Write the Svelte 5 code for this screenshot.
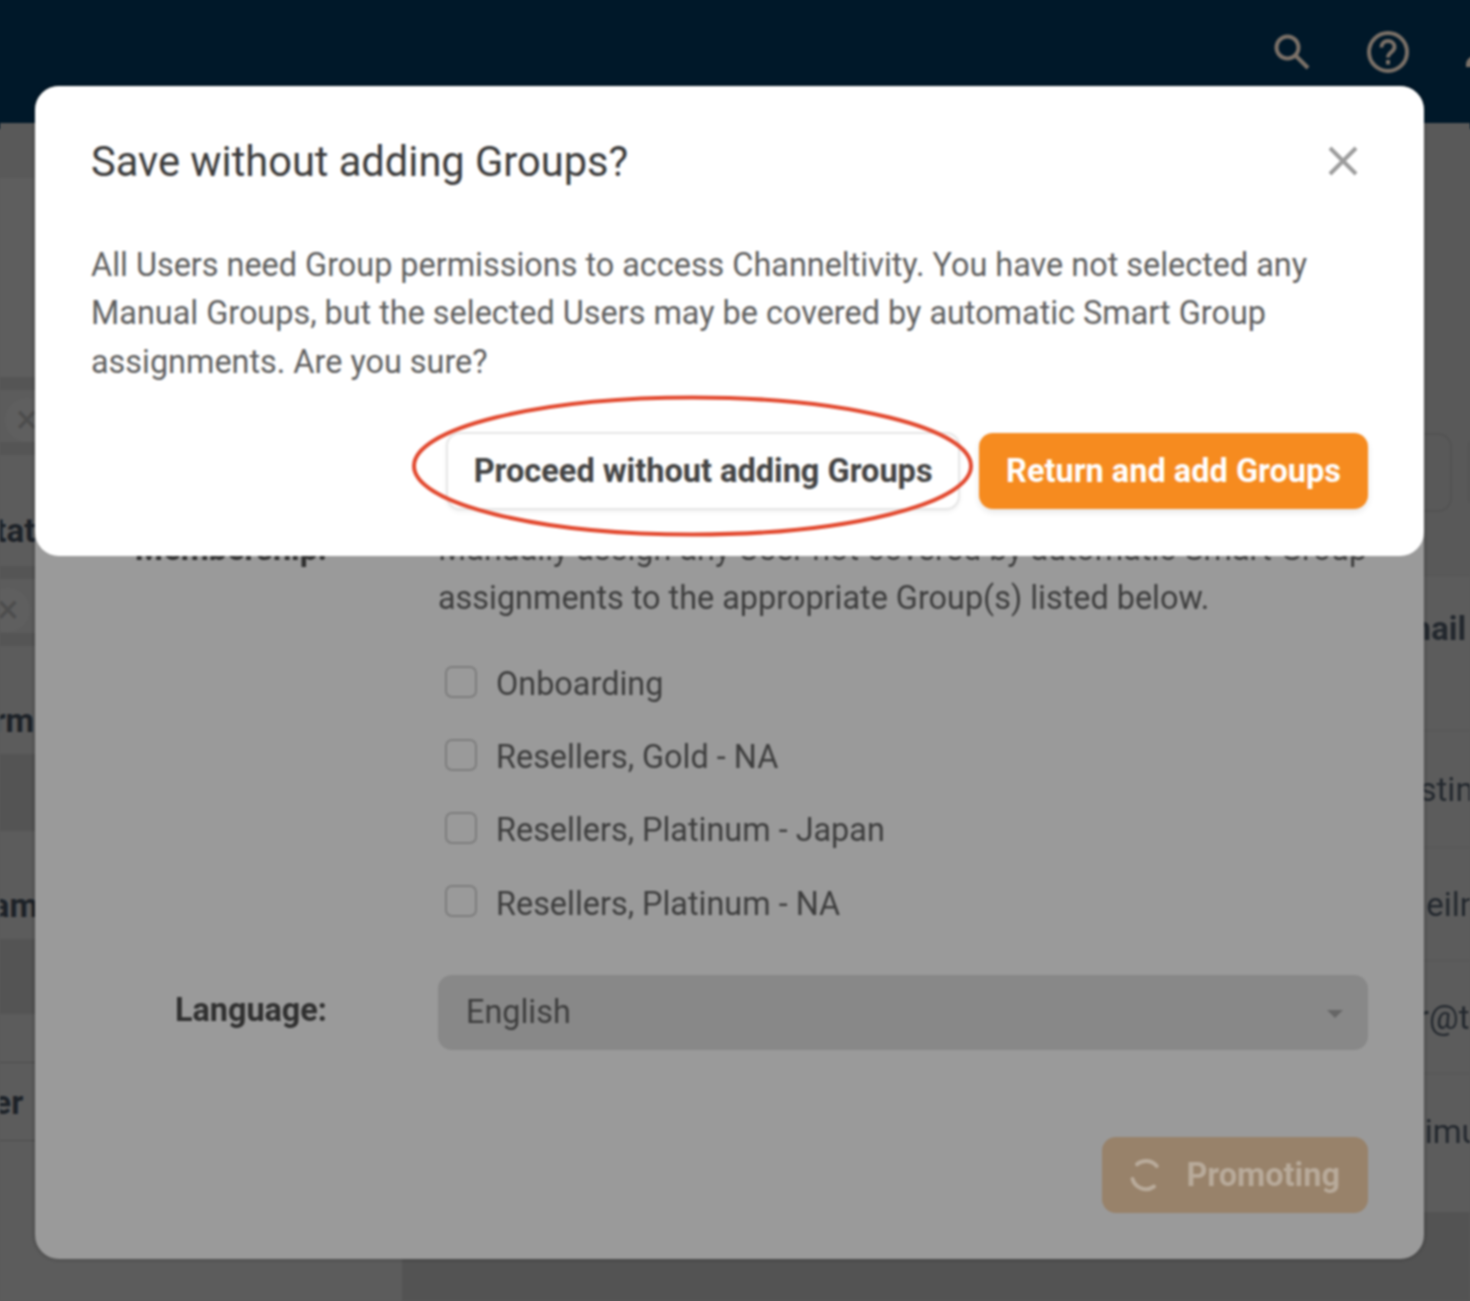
<script lang="ts">
	const leftLabels = [
		{ text: "Status", cls: "status" },
		{ text: "Form", cls: "form" },
		{ text: "Team", cls: "team" },
		{ text: "Partner", cls: "partner" },
	];

	const groups = [
		"Onboarding",
		"Resellers, Gold - NA",
		"Resellers, Platinum - Japan",
		"Resellers, Platinum - NA",
	];

	// only the tail of these shows past the dialog
	const tableRows = ["Post-Existing", "Jane ONeilnor", "iantester@test", "Low Minimum"];
</script>

<div class="page">
	<div class="canvas">
		<header class="topbar">
			<svg class="icon search" width="40" height="40" viewBox="0 0 40 40" fill="none" stroke="#7b7168" stroke-width="4">
				<circle cx="15.5" cy="15.5" r="11" />
				<path d="M23.5 23.5 36 36" />
			</svg>
			<svg class="icon" width="44" height="44" viewBox="0 0 44 44" fill="none" stroke="#7b7168" stroke-width="4">
				<circle cx="22" cy="22" r="19" />
				<path d="M15.5 17.5c0-4 3-6.500 6.500-6.500s6.500 2.500 6.500 6c0 5-6.500 5-6.500 10.500" />
				<path d="M22 30v4.500" />
			</svg>
			<svg class="icon user" width="40" height="40" viewBox="0 0 40 40" fill="#7b7168">
				<circle cx="20" cy="12" r="8" />
				<path d="M4 32c0-7 10-10 16-10s16 3 16 10v3H4z" />
			</svg>
		</header>

		<main class="backdrop">
			<section class="left-panel">
				<div class="left-head"></div>
				<div class="left-intro"></div>
				<div class="band"></div>
				<div class="chip-row"><span class="chip-x">×</span></div>
				<div class="band"></div>
				<div class="label-row status-row"><b>{leftLabels[0].text}</b></div>
				<div class="band"></div>
				<div class="chip-row second"><span class="chip-x">×</span></div>
				<div class="band"></div>
				<div class="label-row form-row"><b>{leftLabels[1].text}</b></div>
				<div class="dark-row"></div>
				<div class="label-row team-row"><b>{leftLabels[2].text}</b></div>
				<div class="dark-row tall"></div>
				<div class="left-gap"></div>
				<div class="label-row partner-row"><b>{leftLabels[3].text}</b></div>
			</section>

			<section class="right-panel">
				<div class="tool-row">
					<span class="tool-box"></span>
					<span class="tool-box"></span>
				</div>
				<div class="table">
					<div class="table-head"><b>Email</b></div>
					{#each tableRows as row}
						<div class="table-row"><span>{row}</span></div>
					{/each}
				</div>
			</section>
		</main>

		<div class="modal under">
			<div class="form-grid">
				<div class="field-label member">Membership:</div>
				<div>
					<p class="help">Manually assign any User not covered by automatic Smart Group assignments to the appropriate Group(s) listed below.</p>
					<ul class="checks">
						{#each groups as group}
							<li><span class="box"></span>{group}</li>
						{/each}
					</ul>
				</div>
				<div class="field-label lang">Language:</div>
				<div class="select">
					<span>English</span>
					<span class="caret"></span>
				</div>
			</div>
			<div class="under-foot">
				<button class="promote">
					<svg width="36" height="36" viewBox="0 0 36 36" fill="none" stroke="#b9ab9b" stroke-width="4" stroke-linecap="round">
						<path d="M9 7.300A14 14 0 0 1 28.700 9" />
						<path d="M4.500 22A14 14 0 0 0 26 29.500" />
					</svg>
					Promoting
				</button>
			</div>
		</div>

		<div class="modal top">
			<div class="top-head">
				<h2>Save without adding Groups?</h2>
				<svg class="close" width="32" height="32" viewBox="0 0 32 32" stroke="#9c9c9c" stroke-width="4">
					<path d="M3 3 29 29M29 3 3 29" />
				</svg>
			</div>
			<p class="message">All Users need Group permissions to access Channeltivity. You have not selected any Manual Groups, but the selected Users may be covered by automatic Smart Group assignments. Are you sure?</p>
			<div class="actions">
				<button class="btn plain">Proceed without adding Groups</button>
				<button class="btn orange">Return and add Groups</button>
			</div>
		</div>

		<svg class="mark" width="1470" height="1301" viewBox="0 0 1470 1301" fill="none">
			<ellipse cx="692.500" cy="466" rx="278.500" ry="68.500" stroke="#e2492f" stroke-width="4" />
		</svg>
	</div>
</div>

<style>
	:global(body) {
		margin: 0;
	}

	.page {
		width: 1470px;
		height: 1301px;
		overflow: hidden;
	}

	/* the shadow keeps the blur from fading out at the picture's edges */
	.canvas {
		position: relative;
		width: 1470px;
		height: 1301px;
		background: #535353;
		box-shadow: 0 0 0 6px #5a5a5a;
		font-family: Roboto, "Liberation Sans", sans-serif;
		filter: blur(0.8px);
	}

	.topbar {
		height: 123px;
		box-sizing: border-box;
		background: #001829;
		box-shadow: 0 0 0 6px #001829;
		display: flex;
		align-items: flex-start;
		justify-content: flex-end;
		gap: 52px;
		padding: 30px 0 0;
		margin-right: -32px;
	}

	.icon.search {
		margin: 2px 2px 0 0;
	}

	.icon.user {
		margin-top: 2px;
	}

	.backdrop {
		display: grid;
		grid-template-columns: 402px 1fr;
		height: 1178px;
	}

	.left-panel {
		background: #5c5c5c;
		display: flex;
		flex-direction: column;
		font-size: 33px;
		color: #1d2228;
		overflow: hidden;
	}

	.left-head {
		height: 55px;
		background: #595959;
		flex: none;
	}

	.left-intro {
		height: 199px;
		background: #5e5e5e;
		flex: none;
	}

	.band {
		height: 13px;
		background: #555;
		flex: none;
	}

	.chip-row {
		height: 52px;
		flex: none;
		display: flex;
		align-items: center;
		background: #5c5c5c;
		color: #4d4d4d;
	}

	.chip-row.second {
		height: 54px;
	}

	.chip-x {
		width: 44px;
		height: 44px;
		border-radius: 50%;
		background: #5f5f5f;
		display: flex;
		align-items: center;
		justify-content: center;
		font-size: 40px;
		line-height: 1;
		margin: 8px 0 0 5px;
	}

	.chip-row.second .chip-x {
		margin-left: -14px;
	}

	.label-row {
		flex: none;
		display: flex;
		align-items: center;
		background: #5c5c5c;
	}

	.status-row {
		height: 111px;
		padding-top: 40px;
		box-sizing: border-box;
	}

	.status-row b {
		margin-left: -25px;
	}

	.form-row {
		height: 108px;
		padding-top: 40px;
		box-sizing: border-box;
	}

	.form-row b {
		margin-left: -43px;
	}

	.team-row {
		height: 108px;
		padding-top: 40px;
		box-sizing: border-box;
	}

	.team-row b {
		margin-left: -45px;
	}

	.dark-row {
		height: 77px;
		background: #545454;
		flex: none;
	}

	.dark-row.tall {
		height: 75px;
	}

	.left-gap {
		height: 48px;
		flex: none;
		background: #5c5c5c;
		border-bottom: 1px solid #4c4c4c;
	}

	.partner-row {
		height: 78px;
		padding-top: 2px;
		box-sizing: border-box;
		border-bottom: 1px solid #4c4c4c;
	}

	.partner-row b {
		margin-left: -88px;
	}

	.right-panel {
		overflow: hidden;
		display: flex;
		flex-direction: column;
		background: linear-gradient(#595959, #595959) top / 100% 452px no-repeat;
	}

	.tool-row {
		display: flex;
		justify-content: flex-end;
		gap: 16px;
		margin: 310px -88px 0 0;
		height: 79px;
		flex: none;
	}

	.tool-box {
		width: 90px;
		border: 2px solid #535353;
		border-radius: 14px;
		box-sizing: border-box;
	}

	.table {
		margin-top: 63px;
		height: 637px;
		flex: none;
		background: #5c5c5c;
		border-top: 1px solid #555;
		box-sizing: border-box;
		font-size: 33px;
		color: #23282e;
		white-space: nowrap;
	}

	.table-head {
		height: 155px;
		display: flex;
		align-items: center;
		padding: 0 0 50px 982px;
		box-sizing: border-box;
		border-bottom: 1px solid #555;
	}

	.table-row {
		height: 113px;
		display: flex;
		align-items: center;
		box-sizing: border-box;
		border-bottom: 1px solid #555;
		padding-left: 898px;
	}

	.table-row:nth-child(2) {
		height: 117px;
	}

	.table-row:last-child {
		border-bottom: 0;
		height: 140px;
		padding-bottom: 26px;
	}

	.modal {
		position: absolute;
		left: 35px;
		top: 86px;
		width: 1389px;
		box-sizing: border-box;
		border-radius: 24px;
	}

	.modal.under {
		height: 1173px;
		background: #9a9a9a;
		padding: 439px 56px 46px;
		display: flex;
		flex-direction: column;
		justify-content: space-between;
		box-shadow: 0 0 4px rgba(0, 0, 0, 0.35);
	}

	.form-grid {
		display: grid;
		grid-template-columns: 236px 930px;
		column-gap: 111px;
		row-gap: 34px;
		font-size: 32.400px;
		line-height: 48.700px;
		color: #3d3d3d;
	}

	.field-label {
		font-weight: 700;
		text-align: right;
		color: #303030;
	}

	.field-label.lang {
		align-self: center;
		margin-top: -4px;
	}

	.help {
		margin: 0 -10px 0 0;
	}

	.checks {
		list-style: none;
		margin: 25px 0 0;
		padding: 0;
	}

	.checks li {
		height: 73.300px;
		display: flex;
		align-items: center;
		padding-left: 7px;
		gap: 19px;
	}

	.box {
		width: 32px;
		height: 32px;
		box-sizing: border-box;
		border: 2px solid #7d7d7d;
		border-radius: 7px;
		margin-top: -5px;
	}

	.select {
		height: 75px;
		border-radius: 14px;
		background: #888;
		display: flex;
		align-items: center;
		justify-content: space-between;
		padding: 0 25px 0 28px;
	}

	.caret {
		width: 0;
		height: 0;
		border-left: 8px solid transparent;
		border-right: 8px solid transparent;
		border-top: 8px solid #666;
		margin-top: 3px;
	}

	.under-foot {
		display: flex;
		justify-content: flex-end;
	}

	.promote {
		width: 266px;
		height: 76px;
		border: 0;
		border-radius: 14px;
		background: #98826a;
		color: #b8aa9a;
		font: 700 32.500px Roboto, "Liberation Sans", sans-serif;
		display: flex;
		align-items: center;
		justify-content: flex-end;
		gap: 22px;
		padding: 0 28px 0 0;
	}

	.modal.top {
		height: 470px;
		background: #fff;
		padding: 50px 56px 46px;
		color: #5f5f5f;
	}

	.top-head {
		display: flex;
		align-items: center;
		justify-content: space-between;
		height: 50px;
	}

	h2 {
		margin: 0;
		font-size: 41.600px;
		font-weight: 400;
		color: #3c3c3c;
	}

	.close {
		margin-right: 9px;
	}

	.message {
		margin: 54.500px 0 45.500px;
		font-size: 32.400px;
		line-height: 48.700px;
	}

	.actions {
		display: flex;
		justify-content: flex-end;
		gap: 19px;
	}

	.btn {
		height: 78px;
		border-radius: 14px;
		font: 700 32.500px Roboto, "Liberation Sans", sans-serif;
		padding: 0 25.500px;
		box-sizing: border-box;
	}

	.plain {
		background: #fff;
		color: #444;
		border: 2px solid #e6e6e6;
		box-shadow: 0 2px 4px rgba(0, 0, 0, 0.06);
	}

	.orange {
		background: #f68b1f;
		color: #fff;
		border: 0;
		height: 76px;
		padding: 0 27px;
		margin-top: 1px;
		box-shadow: 0 3px 6px rgba(0, 0, 0, 0.1);
	}

	.mark {
		position: absolute;
		left: 0;
		top: 0;
		pointer-events: none;
	}
</style>
